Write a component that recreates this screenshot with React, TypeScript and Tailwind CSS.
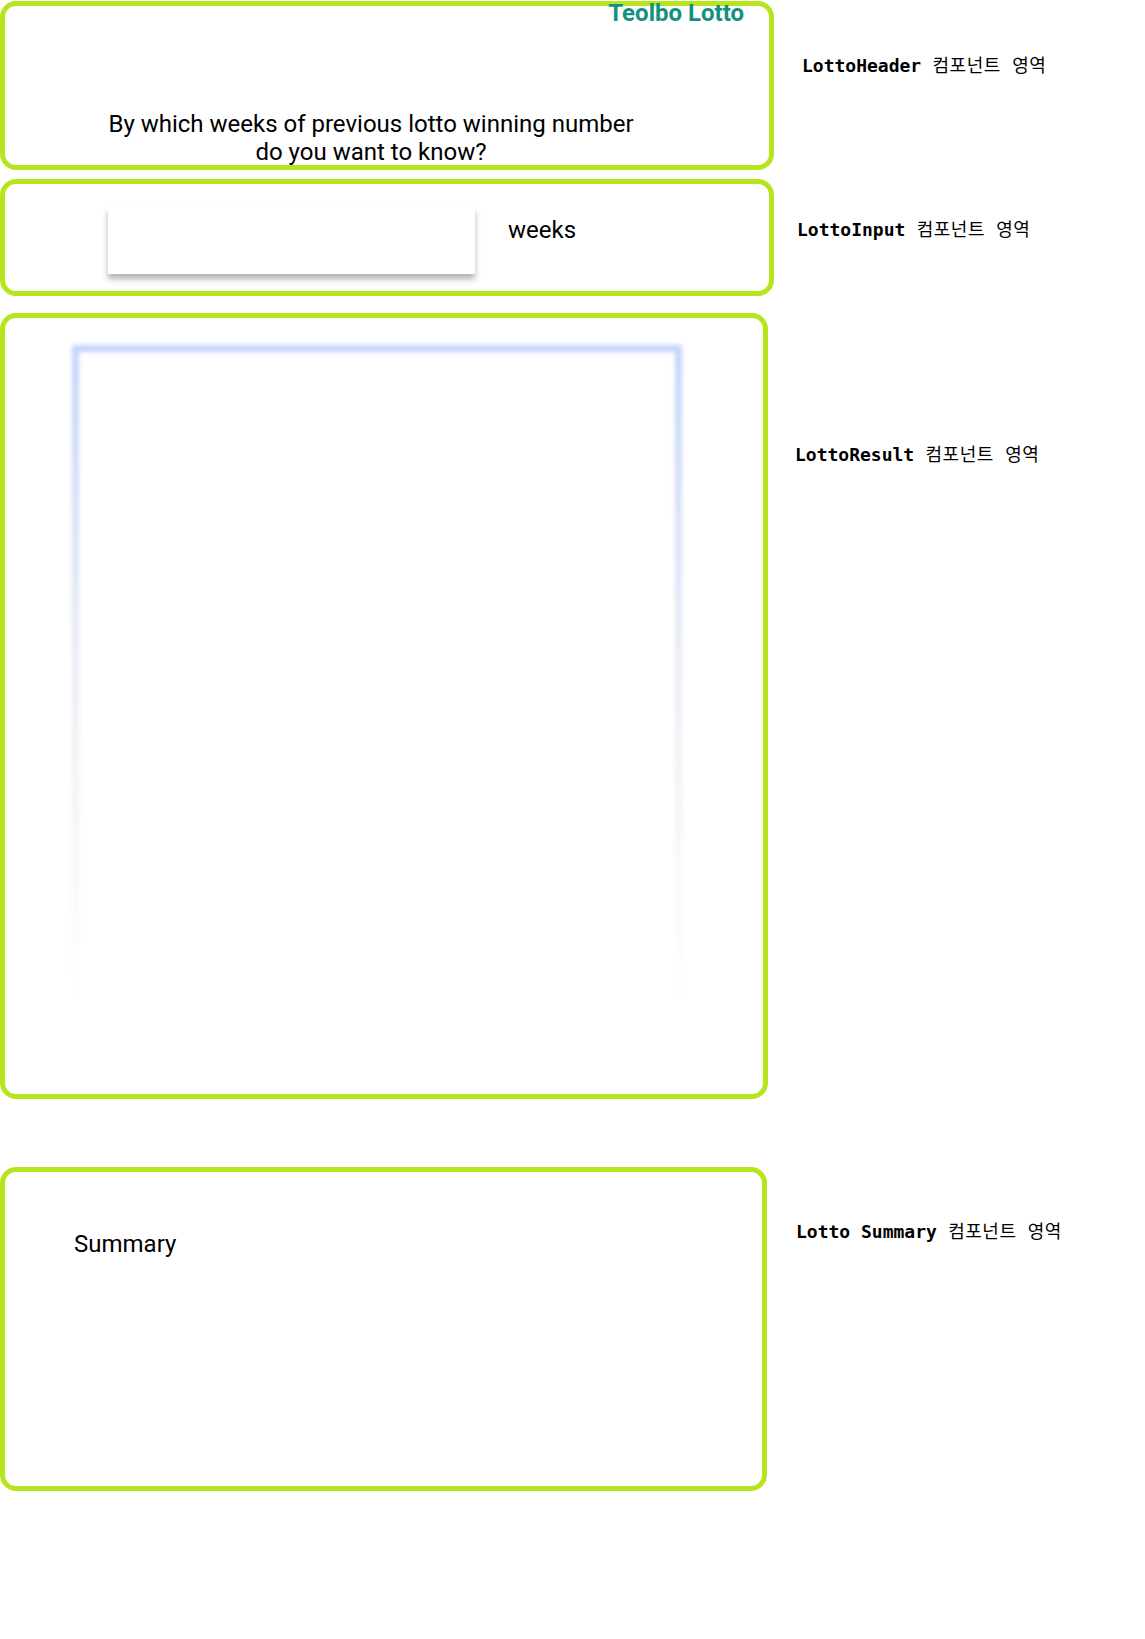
import React from "react";

const boxBorder = "border-[5px] border-[#b5e61d] rounded-[16px] bg-white";

function AreaLabel({ name, className }: { name: string; className: string }) {
  return (
    <p
      className={"text-[18px] leading-[24px] text-black whitespace-pre " + className}
      style={{ fontFamily: '"DejaVu Sans Mono", "Noto Sans CJK KR", monospace' }}
    >
      <span className="font-bold">{name}</span>
      <span className="tracking-[0.5px]"> 컴포넌트 영역</span>
    </p>
  );
}

function LottoHeader() {
  return (
    <header className={boxBorder + " w-[774px] h-[169px] flex flex-col justify-between"}>
      <h1 className="-mt-[7px] pr-[25px] text-right text-[24px] leading-[28px] font-bold text-[#14907f]">
        Teolbo Lotto
      </h1>
      <p className="pr-[32px] -mb-px text-center text-[24px] leading-[28px] text-black">
        By which weeks of previous lotto winning number
        <br />
        do you want to know?
      </p>
    </header>
  );
}

function LottoInput() {
  return (
    <section className={boxBorder + " w-[774px] h-[117px] flex items-start pl-[103px] pt-[23px]"}>
      <input
        type="number"
        className="w-[367px] h-[67px] bg-white outline-none shadow-[0_5px_6px_rgba(0,0,0,0.3)]"
      />
      <span className="ml-[33px] mt-[9px] text-[24px] leading-[28px] text-black">weeks</span>
    </section>
  );
}

function LottoResult() {
  return (
    <section className={boxBorder + " w-[768px] h-[786px] pl-[67px] pt-[27px]"}>
      <div className="w-[610px] h-[665px] p-[7px] blur-[2px] bg-gradient-to-b from-[#c3d3fb] via-[#eceef4] to-white">
        <div className="w-full h-full bg-white" />
      </div>
    </section>
  );
}

function LottoSummary() {
  return (
    <section className={boxBorder + " w-[767px] h-[324px] pl-[69px] pt-[58px]"}>
      <h2 className="text-[24px] leading-[28px] text-black">Summary</h2>
    </section>
  );
}

export default function App() {
  return (
    <div className="w-[1145px] min-h-[1639px] bg-white pt-px" style={{ fontFamily: "Roboto, sans-serif" }}>
      <div className="flex items-start">
        <LottoHeader />
        <AreaLabel name="LottoHeader" className="ml-[28px] mt-[53px]" />
      </div>
      <div className="flex items-start mt-[9px]">
        <LottoInput />
        <AreaLabel name="LottoInput" className="ml-[23px] mt-[39px]" />
      </div>
      <div className="flex items-start mt-[17px]">
        <LottoResult />
        <AreaLabel name="LottoResult" className="ml-[27px] mt-[130px]" />
      </div>
      <div className="flex items-start mt-[68px]">
        <LottoSummary />
        <AreaLabel name="Lotto Summary" className="ml-[29px] mt-[53px]" />
      </div>
    </div>
  );
}
